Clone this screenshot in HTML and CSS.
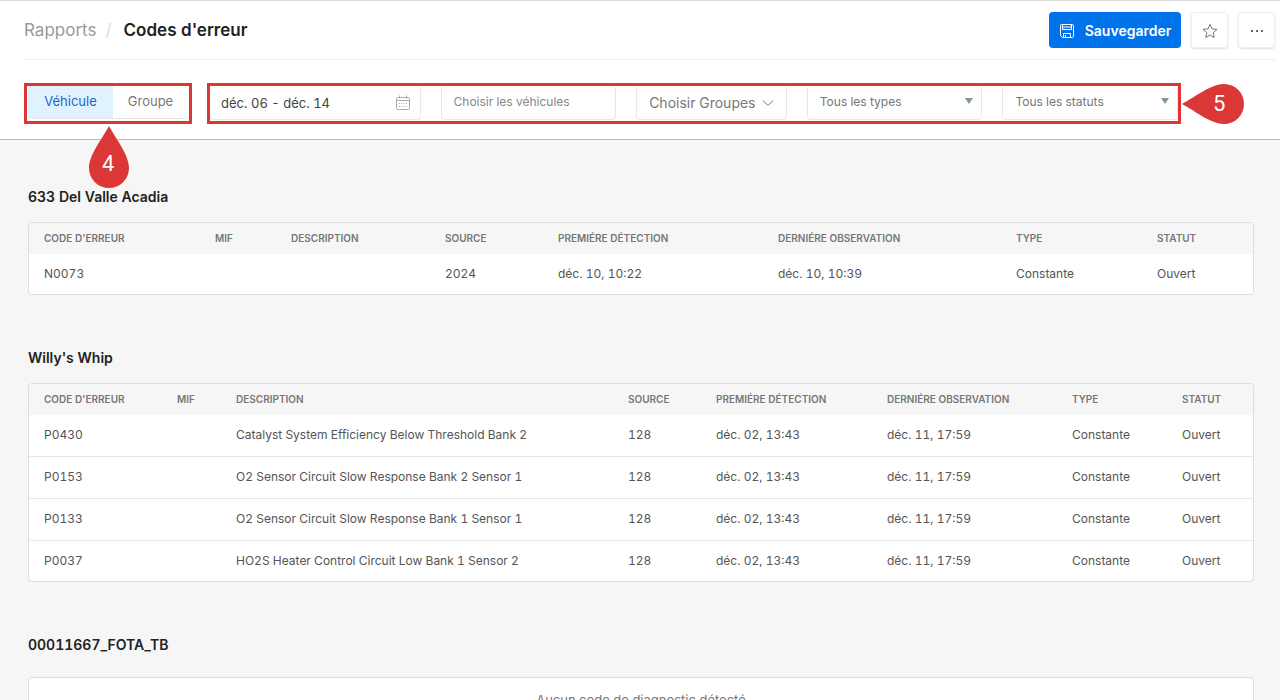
FILE: index.html
```html
<!DOCTYPE html>
<html lang="fr">
<head>
    <meta charset="UTF-8">
    <meta name="viewport" content="width=device-width, initial-scale=1.0">
    <title>Codes d'erreur</title>
    <link rel="stylesheet" href="styles.css">
</head>
<body>
    <header class="page-header">
        <div class="title-bar">
            <nav class="breadcrumb">
                <a href="#">Rapports</a>
                <span class="slash">/</span>
                <h1>Codes d'erreur</h1>
            </nav>
            <div class="actions">
                <button class="btn primary">
                    <svg width="16" height="16" viewBox="0 0 16 16" fill="none" stroke="currentColor">
                        <path d="M1.500 2.500a1 1 0 0 1 1-1h11a1 1 0 0 1 1 1v11a1 1 0 0 1-1 1h-10l-2-2z"/>
                        <path d="M3.500 1.500v5h9v-5M4.500 14.500v-4h7v4M6.500 12v2.500M3.500 4h9"/>
                    </svg>
                    Sauvegarder
                </button>
                <button class="btn square" aria-label="Favori">
                    <svg width="16" height="16" viewBox="0 0 16 16" fill="none" stroke="currentColor" stroke-linejoin="round">
                        <path d="M8 1.300l2 4.600 5 .5-3.800 3.300 1.100 4.900L8 12l-4.300 2.600 1.100-4.900L1 6.400l5-.5z"/>
                    </svg>
                </button>
                <button class="btn square" aria-label="Plus">
                    <svg width="16" height="16" viewBox="0 0 16 16" fill="#333">
                        <circle cx="3" cy="8" r="1"/><circle cx="8" cy="8" r="1"/><circle cx="13" cy="8" r="1"/>
                    </svg>
                </button>
            </div>
        </div>

        <div class="filters">
            <div class="callout callout-toggle">
                <div class="toggle">
                    <button class="active">Véhicule</button>
                    <button>Groupe</button>
                </div>
                <div class="pin pin-up">
                    <svg width="40" height="62" viewBox="0 0 40 62"><path d="M20 0C27 13 40 29 40 42A20 20 0 0 1 0 42C0 29 13 13 20 0z"/></svg>
                    <span>4</span>
                </div>
            </div>

            <div class="callout callout-fields">
                <div class="field date">
                    <input type="text" value="déc. 06 - déc. 14" aria-label="Période">
                    <svg width="16" height="16" viewBox="0 0 16 16" fill="none" stroke="currentColor">
                        <rect x="1.500" y="2.500" width="13" height="12" rx="1"/>
                        <path d="M1.500 5.500h13M4.500 .5v3M11.500 .5v3"/>
                        <path d="M4 8.500h8M4 11.500h8" stroke-dasharray="1 1.300"/>
                    </svg>
                </div>
                <div class="field">
                    <input type="text" placeholder="Choisir les véhicules" aria-label="Véhicules">
                </div>
                <button class="field groups">
                    Choisir Groupes
                    <svg width="12" height="8" viewBox="0 0 12 8" fill="none" stroke="currentColor"><path d="M1 1.500l5 5 5-5"/></svg>
                </button>
                <div class="field select">
                    <select aria-label="Type"><option>Tous les types</option></select>
                </div>
                <div class="field select">
                    <select aria-label="Statut"><option>Tous les statuts</option></select>
                </div>
                <div class="pin pin-left">
                    <svg width="62" height="40" viewBox="0 0 62 40"><path d="M0 20C13 13 29 0 42 0A20 20 0 0 1 42 40C29 40 13 27 0 20z"/></svg>
                    <span>5</span>
                </div>
            </div>
        </div>
    </header>

    <main>
        <section>
            <h2>633 Del Valle Acadia</h2>
            <div class="card">
                <table class="codes loose">
                    <thead>
                        <tr>
                            <th class="code">Code d'erreur</th>
                            <th class="mif">MIF</th>
                            <th>Description</th>
                            <th class="source">Source</th>
                            <th class="first">Premiére détection</th>
                            <th class="last">Derniére observation</th>
                            <th class="type">Type</th>
                            <th class="status">Statut</th>
                        </tr>
                    </thead>
                    <tbody>
                        <tr><td>N0073</td><td></td><td></td><td>2024</td><td>déc. 10, 10:22</td><td>déc. 10, 10:39</td><td>Constante</td><td>Ouvert</td></tr>
                    </tbody>
                </table>
            </div>
        </section>

        <section>
            <h2>Willy's Whip</h2>
            <div class="card">
                <table class="codes">
                    <thead>
                        <tr>
                            <th class="code">Code d'erreur</th>
                            <th class="mif">MIF</th>
                            <th>Description</th>
                            <th class="source">Source</th>
                            <th class="first">Premiére détection</th>
                            <th class="last">Derniére observation</th>
                            <th class="type">Type</th>
                            <th class="status">Statut</th>
                        </tr>
                    </thead>
                    <tbody>
                        <tr><td>P0430</td><td></td><td>Catalyst System Efficiency Below Threshold Bank 2</td><td>128</td><td>déc. 02, 13:43</td><td>déc. 11, 17:59</td><td>Constante</td><td>Ouvert</td></tr>
                        <tr><td>P0153</td><td></td><td>O2 Sensor Circuit Slow Response Bank 2 Sensor 1</td><td>128</td><td>déc. 02, 13:43</td><td>déc. 11, 17:59</td><td>Constante</td><td>Ouvert</td></tr>
                        <tr><td>P0133</td><td></td><td>O2 Sensor Circuit Slow Response Bank 1 Sensor 1</td><td>128</td><td>déc. 02, 13:43</td><td>déc. 11, 17:59</td><td>Constante</td><td>Ouvert</td></tr>
                        <tr><td>P0037</td><td></td><td>HO2S Heater Control Circuit Low Bank 1 Sensor 2</td><td>128</td><td>déc. 02, 13:43</td><td>déc. 11, 17:59</td><td>Constante</td><td>Ouvert</td></tr>
                    </tbody>
                </table>
            </div>
        </section>

        <section class="empty">
            <h2>00011667_FOTA_TB</h2>
            <div class="card">
                <p>Aucun code de diagnostic détecté</p>
            </div>
        </section>
    </main>
</body>
</html>
```
FILE: styles.css
```css
* {
    box-sizing: border-box;
}

body {
    margin: 0;
    background: #f6f6f6;
    color: #555;
    font-family: Inter, "Liberation Sans", sans-serif;
    font-size: 12px;
    font-variant-numeric: tabular-nums;
}

button, input, select {
    font: inherit;
    color: inherit;
    border: none;
    background: none;
    padding: 0;
    margin: 0;
}

button {
    cursor: pointer;
}

svg {
    display: block;
}

/* Header */
.page-header {
    background: #fff;
    border-top: 1px solid #ddd;
    border-bottom: 1px solid #bbb;
    padding: 0 5px 15px 24px;
}

.title-bar {
    display: flex;
    justify-content: space-between;
    align-items: center;
    height: 59px;
    border-bottom: 1px solid #eee;
}

.breadcrumb {
    display: flex;
    align-items: center;
    gap: 9px;
    font-size: 17px;
}

.breadcrumb a {
    color: #999;
    text-decoration: none;
}

.slash {
    color: #ddd;
}

h1 {
    margin: 0 0 0 3px;
    font-size: 17px;
    font-weight: 600;
    color: #222;
}

.actions {
    display: flex;
    gap: 10px;
}

.btn {
    display: flex;
    align-items: center;
    justify-content: center;
    height: 36px;
    border-radius: 4px;
}

.btn svg {
    margin-top: 2px;
}

.primary {
    gap: 10px;
    width: 132px;
    background: #0073eb;
    color: #fff;
    font-size: 14px;
    font-weight: 600;
}

.square {
    width: 37px;
    border: 1px solid #eee;
    box-shadow: 0 1px 2px #ddd;
    color: #777;
}

/* Filters */
.filters {
    display: flex;
    gap: 15px;
    margin: 23px 94px 0 0;
}

.callout {
    position: relative;
    height: 41px;
    border: 3px solid #dc3737;
}

.callout-toggle {
    width: 168px;
    padding: 0 1px 2px;
}

.callout-fields {
    display: flex;
    flex: 1;
    gap: 20px;
    padding-bottom: 1px;
}

.toggle {
    display: flex;
    height: 100%;
    border-bottom: 1px solid #e4e4e4;
    border-radius: 4px;
    font-size: 13px;
    color: #777;
}

.toggle button {
    flex: 1;
    padding-bottom: 2px;
}

.toggle .active {
    flex: none;
    width: 85px;
    background: #e1f2ff;
    color: #1b67c9;
}

.field {
    display: flex;
    align-items: center;
    flex: 1 1 176px;
    min-width: 0;
    padding: 0 12px 3px;
    border: 1px solid #e8e8e8;
    border-top: none;
    border-radius: 4px;
    color: #777;
}

.field input,
.field select {
    flex: 1;
    min-width: 0;
    height: 30px;
    outline: none;
}

.field input::placeholder {
    color: #888;
    opacity: 1;
}

.date {
    flex-basis: 211px;
    padding: 0 9px 0 11px;
    border-left: none;
    font-size: 13px;
    color: #444;
}

.date svg {
    color: #aaa;
}

.groups {
    flex-basis: 151px;
    justify-content: space-between;
    padding-bottom: 0;
    font-size: 14px;
}

.select select {
    appearance: none;
}

.select {
    padding-right: 8px;
}

.select::after {
    content: "";
    border: 4px solid transparent;
    border-top: 6px solid #8296a3;
    border-bottom: none;
}

/* Numbered pins */
.pin {
    position: absolute;
    z-index: 1;
    color: #fff;
    font-family: Roboto, sans-serif;
    font-size: 22px;
    line-height: 24px;
}

.pin svg {
    fill: #dc3737;
}

.pin span {
    position: absolute;
}

.pin-up {
    left: 62px;
    top: 40px;
}

.pin-up span {
    left: 13px;
    top: 26px;
}

.pin-left {
    left: 100%;
    top: -2px;
    margin-left: 4px;
}

.pin-left span {
    left: 31px;
    top: 8px;
}

/* Report */
main {
    padding: 47px 26px 0 28px;
}

section {
    margin-bottom: 53px;
}

h2 {
    margin: 0 0 15px;
    font-size: 14px;
    line-height: 20px;
    font-weight: 600;
    color: #222;
}

.card {
    background: #fff;
    border: 1px solid #ddd;
    border-radius: 4px;
    overflow: hidden;
}

.codes {
    width: 100%;
    table-layout: fixed;
    border-collapse: separate;
    border-spacing: 0;
}

.codes th {
    height: 31px;
    padding: 0 0 2px 15px;
    background: #f6f6f6;
    text-align: left;
    text-transform: uppercase;
    white-space: nowrap;
    font-size: 10px;
    font-weight: 600;
    color: #777;
}

.codes td {
    height: 42px;
    padding: 0 0 2px 15px;
    border-bottom: 1px solid #e6e6e6;
    white-space: nowrap;
}

.codes tr:last-child td {
    height: 40px;
    border-bottom: none;
}

.code { width: 133px; }
.mif { width: 59px; }
.source { width: 88px; }
.first { width: 171px; }
.last { width: 185px; }
.type { width: 110px; }
.status { width: 86px; }

/* no descriptions, so the other columns spread out */
.loose .code { width: 171px; }
.loose .mif { width: 76px; }
.loose .source { width: 113px; }
.loose .first { width: 220px; }
.loose .last { width: 238px; }
.loose .type { width: 141px; }
.loose .status { width: 111px; }

.empty h2 {
    margin-bottom: 22px;
}

.empty p {
    margin: 0;
    padding: 12px;
    text-align: center;
    font-size: 13px;
    line-height: 20px;
    color: #777;
}
```
